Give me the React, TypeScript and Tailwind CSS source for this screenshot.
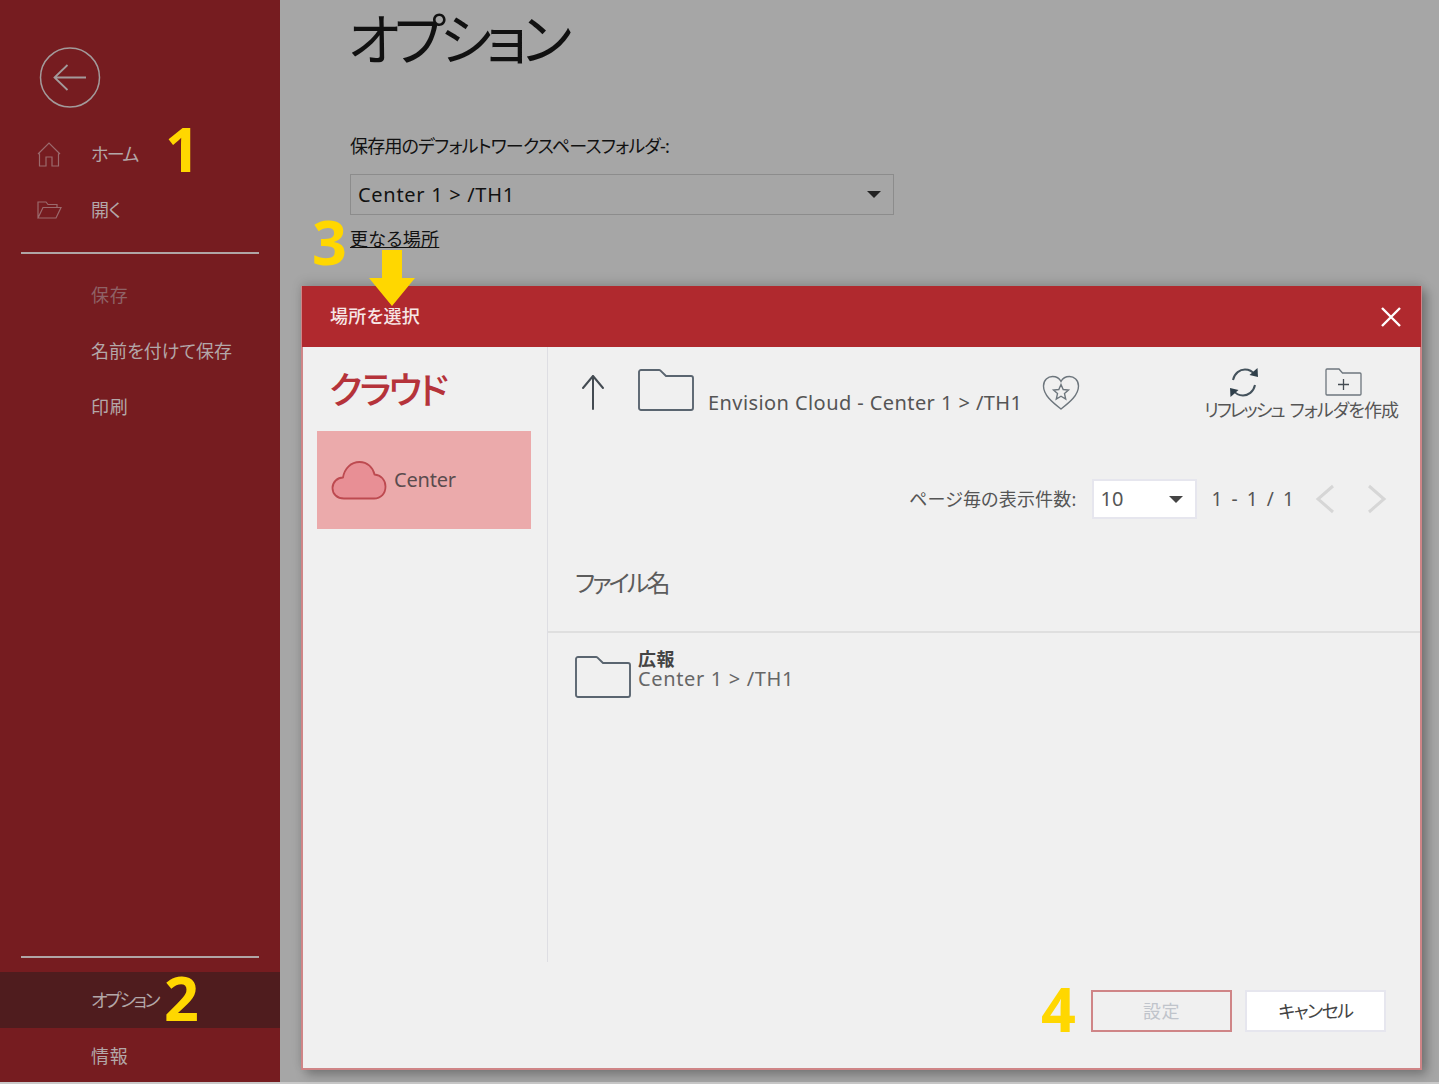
import React from "react";

const JP = "font-['Noto_Sans','Noto_Sans_CJK_JP',sans-serif] [font-feature-settings:'palt']";

function Badge({ n, className }: { n: string; className: string }) {
  return (
    <div className={`absolute z-20 font-['Open_Sans',sans-serif] font-bold text-[61px] leading-none text-[#ffd700] ${className}`}>
      {n}
    </div>
  );
}

function FolderIcon({ className }: { className: string }) {
  return (
    <svg viewBox="0 0 56 42" fill="none" className={className}>
      <path
        d="M3 1h18a2 2 0 0 1 1.500.6L28 7h25a2 2 0 0 1 2 2v30a2 2 0 0 1-2 2H3a2 2 0 0 1-2-2V3a2 2 0 0 1 2-2Z"
        stroke="#5a6570"
        strokeWidth="1.900"
        strokeLinejoin="round"
      />
    </svg>
  );
}

function NavItem({
  label,
  icon,
  dim,
  active,
  track,
}: {
  label: string;
  icon?: React.ReactNode;
  dim?: boolean;
  active?: boolean;
  track: string;
}) {
  return (
    <div className={`h-14 shrink-0 flex items-center pl-[37px] ${active ? "bg-[#4f1c1e]" : ""}`}>
      <div className="w-[54px] shrink-0 flex items-center">{icon}</div>
      <span className={`text-[18px] ${track} ${dim ? "text-[#8f6266]" : "text-[#b3a7a8]"}`}>{label}</span>
    </div>
  );
}

function Sidebar() {
  return (
    <aside className="w-[280px] shrink-0 h-full overflow-hidden bg-[#761c20] flex flex-col">
      <div className="pt-[47px] pl-[39px] pb-[17px]">
        <svg width="62" height="62" viewBox="0 0 62 62" fill="none" stroke="#a39a9b" className="block">
          <circle cx="31" cy="30.500" r="29.500" strokeWidth="1.500" />
          <path d="M16 30.500h31M28.500 18 15.500 30.500 28.500 43" strokeWidth="1.800" />
        </svg>
      </div>
      <NavItem
        label="ホーム"
        track="tracking-[-1.600px]"
        icon={
          <svg width="24" height="25" viewBox="0 0 24 25" fill="none" stroke="#9b6a6d" strokeWidth="1.200">
            <path d="M1 12 12 1l11 11M2.500 11.500V24h6.500v-9h6v9h6.500V11.500" />
          </svg>
        }
      />
      <NavItem
        label="開く"
        track="tracking-[-0.200px]"
        icon={
          <svg width="25" height="18" viewBox="0 0 25 18" fill="none" stroke="#9b6a6d" strokeWidth="1.200">
            <path d="M1 17V1h8l2 2.500h9V6.500M1 17h18l5-10.500H6L1 17Z" />
          </svg>
        }
      />
      <div className="mx-[21px] mt-[14px] h-[2px] shrink-0 bg-[#b0a5a6]" />
      <div className="mt-[13px]">
        <NavItem label="保存" dim track="tracking-[0.800px]" />
        <NavItem label="名前を付けて保存" track="tracking-[0.050px]" />
        <NavItem label="印刷" track="tracking-[0.800px]" />
      </div>
      <div className="mt-auto mx-[21px] mb-[14px] h-[2px] shrink-0 bg-[#b0a5a6]" />
      <NavItem label="オプション" active track="tracking-[-2.400px]" />
      <div className="-mb-[2px]">
        <NavItem label="情報" track="tracking-[0.800px]" />
      </div>
    </aside>
  );
}

function Dialog() {
  return (
    <section className="absolute z-10 left-[301px] top-[286px] w-[1121px] h-[784px] bg-[#f0f0f0] border-2 border-t-0 border-[#cf8587] shadow-[5px_5px_10px_rgba(0,0,0,0.28),0_-4px_10px_rgba(0,0,0,0.12)] flex flex-col text-[#555]">
      <header className="h-[61px] shrink-0 -mx-[1px] bg-[#b0292e] flex items-center justify-between pl-[28px] pr-[18px]">
        <span className="text-[18px] font-medium text-[#f6e6e6] tracking-[0.300px]">場所を選択</span>
        <svg width="24" height="24" viewBox="0 0 24 24" stroke="#fff" strokeWidth="2.400" fill="none">
          <path d="M3 3l18 18M21 3 3 21" />
        </svg>
      </header>
      <div className="flex h-[615px] shrink-0">
        <div className="w-[245px] shrink-0 border-r border-[#dedee3] pl-[14px]">
          <h2 className="h-[84px] pl-[12px] flex items-center text-[37px] font-medium text-[#b5333a] tracking-[-2.800px] leading-none">クラウド</h2>
          <div className="w-[214px] h-[98px] bg-[#ebaaab] flex items-center pl-[14px] gap-[7px]">
            <svg width="56" height="40" viewBox="0 0 56 40" fill="#e88f95" stroke="#bd4a50" strokeWidth="1.800">
              <path d="M13 38.500C6 38.500 1.500 34 1.500 28c0-6 5-10.500 10.500-10.500C13.500 8.500 20 2 28.500 2c8 0 13.500 5.500 15 12.500C50 15 54.500 20 54.500 26.500c0 7-4.500 12-11.500 12Z" strokeLinejoin="round" />
            </svg>
            <span className="text-[20px] text-[#5a4c4e] tracking-[-0.200px]">Center</span>
          </div>
        </div>
        <div className="flex-1 min-w-0 flex flex-col">
          <div className="h-[117px] flex items-start pl-[33px] pr-[22px] pt-[22px]">
            <svg width="24" height="36" viewBox="0 0 24 36" fill="none" stroke="#444b52" strokeWidth="2" className="mt-[5px] shrink-0">
              <path d="M12 35V2M2 14 12 2l10 12" strokeLinecap="round" strokeLinejoin="round" />
            </svg>
            <FolderIcon className="w-[56px] h-[42px] ml-[33px] shrink-0" />
            <span className="ml-[14px] mt-[20px] text-[20px] leading-[28px] text-[#555] whitespace-pre tracking-[0.420px]">Envision Cloud - Center 1 &gt; /TH1</span>
            <svg width="38" height="35" viewBox="0 0 38 35" fill="none" stroke="#6d767d" strokeWidth="1.400" className="ml-[20px] mt-[6px] shrink-0">
              <path d="M19 34C10 27 1.500 20 1.500 11 1.500 5 6 1.500 10.500 1.500c4 0 7 2 8.500 5 1.500-3 4.500-5 8.500-5C32 1.500 36.500 5 36.500 11 36.500 20 28 27 19 34Z" />
              <path d="M19 9.500l2.200 5 5.300.500-4 3.600 1.200 5.400-4.700-2.800-4.700 2.800 1.200-5.400-4-3.600 5.300-.500Z" />
            </svg>
            <div className="ml-auto flex gap-[6px]">
              <div className="flex flex-col items-center">
                <svg width="30" height="31" viewBox="0 0 30 31" fill="none" className="-mt-[2px] shrink-0">
                  <path d="M4 13C5.500 6 11 2.500 16 2.500c4.500 0 7.500 2 9.500 5" stroke="#44525c" strokeWidth="2" />
                  <path d="M20.500 8 29 10l-.5-9Z" fill="#2f3f4a" />
                  <path d="M26 18c-1.500 7-7 10.500-12 10.500-4.500 0-7.500-2-9.500-5" stroke="#44525c" strokeWidth="2" />
                  <path d="M9.500 23 1 21l.5 9Z" fill="#2f3f4a" />
                </svg>
                <span className="text-[18px] leading-[24px] tracking-[-2px] whitespace-nowrap">リフレッシュ</span>
              </div>
              <div className="flex flex-col items-center">
                <svg width="37" height="28" viewBox="0 0 37 28" fill="none" stroke="#6d767d" strokeWidth="1.300" className="-mt-[1px] shrink-0">
                  <path d="M2 1h12l3.500 4H35a1 1 0 0 1 1 1v20a1 1 0 0 1-1 1H2a1 1 0 0 1-1-1V2a1 1 0 0 1 1-1Z" />
                  <path d="M18.500 11v11M13 16.500h11" stroke="#444b52" />
                </svg>
                <span className="mt-[2px] text-[18px] leading-[24px] tracking-[-0.950px] whitespace-nowrap">フォルダを作成</span>
              </div>
            </div>
          </div>
          <div className="h-[40px] flex items-center justify-end pr-[33px] mt-[15px]">
            <span className="text-[18px] tracking-[0.200px] mr-[15px]">ページ毎の表示件数:</span>
            <div className="w-[105px] h-[40px] bg-white border-2 border-[#e6e6ee] flex items-center justify-between pl-[7px] pr-[12px] text-[20px]">
              <span>10</span>
              <span className="w-0 h-0 border-x-[7px] border-x-transparent border-t-[7px] border-t-[#444]" />
            </div>
            <span className="ml-[15px] text-[19px] whitespace-pre tracking-[2.100px]">1 - 1 / 1</span>
            <svg width="20" height="30" viewBox="0 0 20 30" fill="none" stroke="#d6d6d6" strokeWidth="3" className="ml-[19px] shrink-0">
              <path d="M18 2 3 15l15 13" />
            </svg>
            <svg width="20" height="30" viewBox="0 0 20 30" fill="none" stroke="#d6d6d6" strokeWidth="3" className="ml-[32px] shrink-0">
              <path d="M2 2l15 13L2 28" />
            </svg>
          </div>
          <div className="h-[114px] shrink-0 flex items-center pt-[16px] pl-[27px] text-[24px] tracking-[-2.900px] border-b-2 border-[#dfdfdf] text-[#5c5c5c]">ファイル名</div>
          <div className="flex items-start pl-[27px] pt-[23px]">
            <FolderIcon className="w-[56px] h-[42px] shrink-0" />
            <div className="ml-[7px] -mt-[7px] flex flex-col">
              <span className="text-[18px] font-bold leading-[20px] text-[#444] tracking-[0.400px]">広報</span>
              <span className="text-[20px] leading-[20px] whitespace-pre tracking-[0.650px] text-[#666]">Center 1 &gt; /TH1</span>
            </div>
          </div>
        </div>
      </div>
      <footer className="flex-1 flex justify-end items-start pt-[28px] pr-[34px] gap-[13px] text-[18px]">
        <button className="w-[141px] h-[42px] border-2 border-[#cf8587] text-[#c0c4cb] tracking-[0.500px]">設定</button>
        <button className="w-[141px] h-[42px] bg-white border-2 border-[#e6e6ee] text-[#444] tracking-[-1.500px]">キャンセル</button>
      </footer>
    </section>
  );
}

export default function App() {
  return (
    <div className={`relative w-[1439px] h-[1084px] overflow-hidden flex flex-col ${JP}`}>
      <div className="h-[1082px] shrink-0 bg-[#a6a6a6] flex">
        <Sidebar />
        <main className="flex-1 pl-[70px] text-[#111]">
          <h1 className="h-[77px] -ml-[2px] text-[56px] font-normal leading-[77px] tracking-[-5.600px]">オプション</h1>
          <p className="mt-[55px] text-[18px] leading-[28px] tracking-[-0.800px]">保存用のデフォルトワークスペースフォルダ-:</p>
          <div className="mt-[14px] w-[544px] h-[41px] border border-[#8c8c8c] flex items-center justify-between pl-[7px] pr-[12px] text-[20px] tracking-[0.700px]">
            <span className="whitespace-pre">Center 1 &gt; /TH1</span>
            <span className="w-0 h-0 border-x-[7px] border-x-transparent border-t-[7px] border-t-[#222]" />
          </div>
          <a className="inline-block mt-[10px] text-[18px] leading-[28px] underline tracking-[0.300px]">更なる場所</a>
        </main>
      </div>
      <div className="h-[2px] shrink-0 bg-[#c9c9c9]" />
      <Dialog />
      <Badge n="1" className="left-[165px] top-[118px]" />
      <Badge n="3" className="left-[312px] top-[211px]" />
      <Badge n="2" className="left-[164px] top-[967px]" />
      <Badge n="4" className="left-[1041px] top-[978px]" />
      <svg width="46" height="56" viewBox="0 0 46 56" className="absolute z-20 left-[369px] top-[250px]">
        <path d="M13 0h20v28h13L23 56 0 28h13Z" fill="#ffd700" />
      </svg>
    </div>
  );
}
